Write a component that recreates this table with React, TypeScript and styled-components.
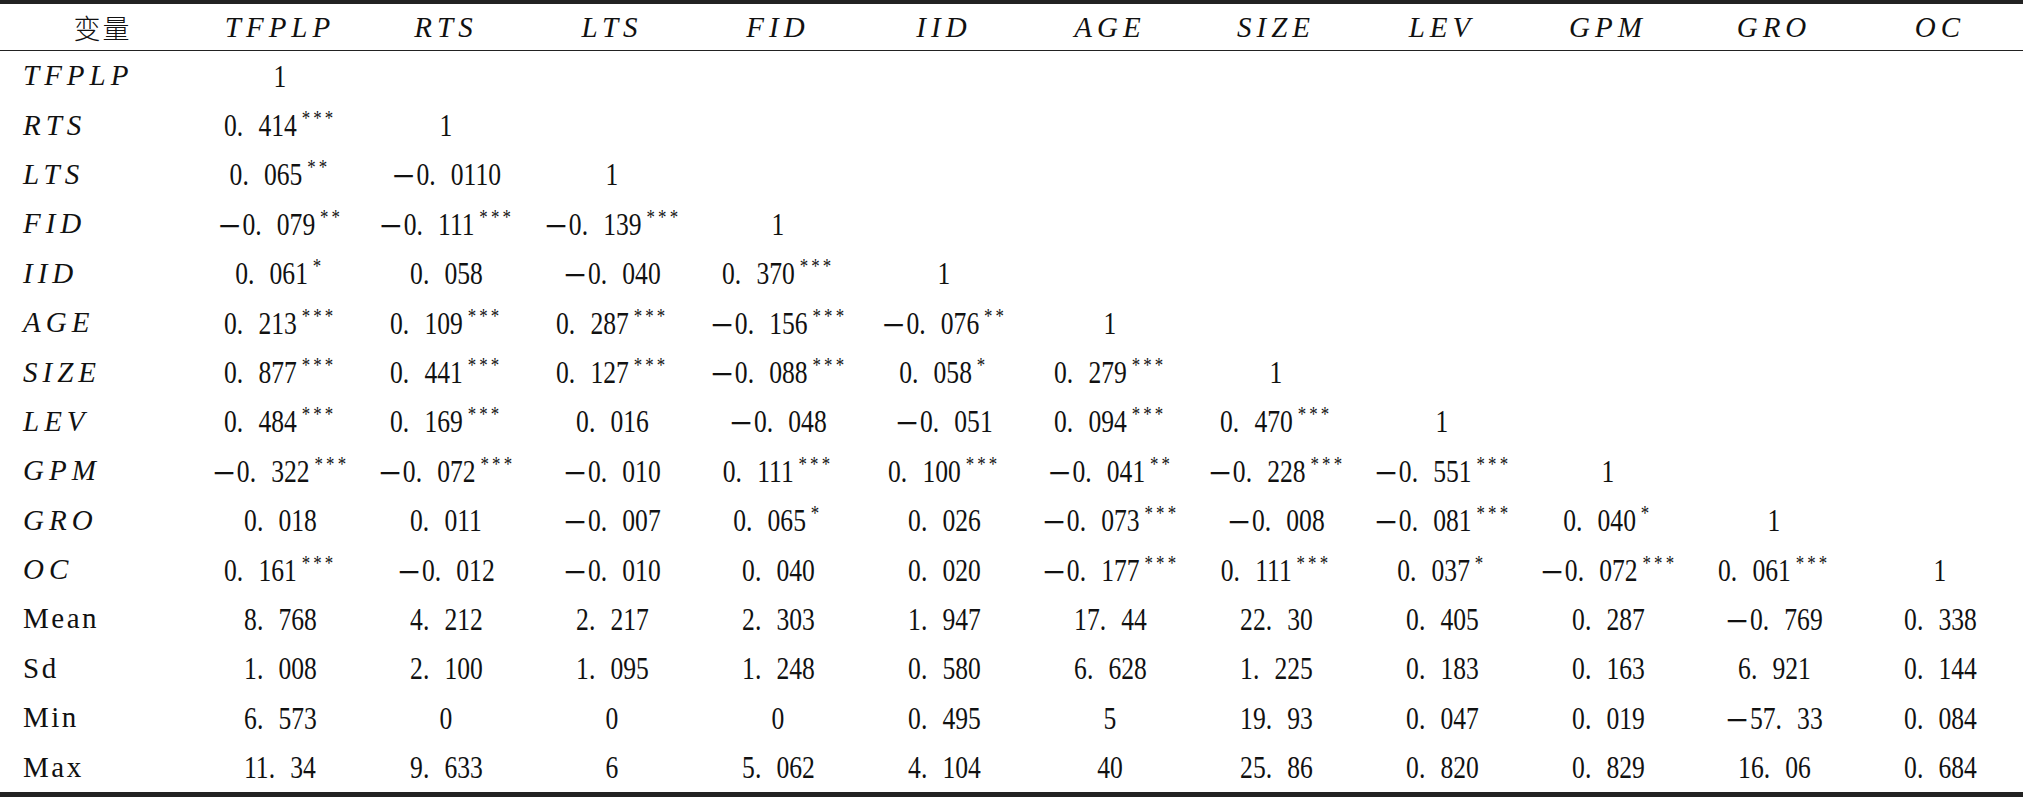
import React from "react";
import styled, { createGlobalStyle } from "styled-components";

const SERIFA = `"Liberation Serif", "Times New Roman", Tinos, "DejaVu Serif", serif`;

const GlobalStyle = createGlobalStyle`
  html, body {
    margin: 0;
    padding: 0;
    background: #ffffff;
  }
  body {
    font-family: ${SERIFA};
    color: #111111;
  }
`;

const Tabela = styled.div`
  width: 2023px;
  box-sizing: border-box;
  border-top: 4px solid #222222;
  border-bottom: 5px solid #222222;
`;

const Linha = styled.div<{ $cabecalho?: boolean }>`
  display: grid;
  grid-template-columns: 197px repeat(11, 166px);
  height: ${(p) => (p.$cabecalho ? "46px" : "49.4px")};
  border-bottom: ${(p) => (p.$cabecalho ? "1.5px solid #222222" : "none")};
`;

const Rotulo = styled.div<{ $italico?: boolean; $centro?: boolean }>`
  display: flex;
  align-items: center;
  justify-content: ${(p) => (p.$centro ? "center" : "flex-start")};
  padding-left: ${(p) => (p.$centro ? "8px" : "23px")};
  font-family: ${SERIFA};
  font-style: ${(p) => (p.$italico ? "italic" : "normal")};
  font-size: 29px;
  letter-spacing: ${(p) => (p.$italico ? "5px" : "2.5px")};
  white-space: nowrap;
`;

const Titulo = styled.span`
  font-family: "Noto Sans CJK SC", sans-serif;
  font-weight: 300;
  font-size: 27px;
  letter-spacing: 2px;
`;

const Celula = styled.div`
  display: flex;
  align-items: center;
  justify-content: center;
  white-space: nowrap;
`;

const Cabeca = styled(Celula)`
  font-family: ${SERIFA};
  font-style: italic;
  font-size: 29px;
  letter-spacing: 5px;
`;

const Valor = styled.span`
  display: inline-flex;
  align-items: flex-start;
  font-family: ${SERIFA};
  font-size: 32px;
  line-height: 1;
  transform: scaleX(0.8);
  transform-origin: center;
`;

const Menos = styled.span`
  font-family: "Noto Sans CJK SC", sans-serif;
`;

const Ponto = styled.span`
  margin-right: 19px;
`;

const Estrelas = styled.span`
  font-family: ${SERIFA};
  font-size: 21px;
  letter-spacing: 4px;
  line-height: 1;
  margin-left: 6px;
  margin-top: -1px;
`;

const cabecalhos = ["TFPLP", "RTS", "LTS", "FID", "IID", "AGE", "SIZE", "LEV", "GPM", "GRO", "OC"];

const correlacoes: string[][] = [
  ["1"],
  ["0.414***", "1"],
  ["0.065**", "-0.0110", "1"],
  ["-0.079**", "-0.111***", "-0.139***", "1"],
  ["0.061*", "0.058", "-0.040", "0.370***", "1"],
  ["0.213***", "0.109***", "0.287***", "-0.156***", "-0.076**", "1"],
  ["0.877***", "0.441***", "0.127***", "-0.088***", "0.058*", "0.279***", "1"],
  ["0.484***", "0.169***", "0.016", "-0.048", "-0.051", "0.094***", "0.470***", "1"],
  ["-0.322***", "-0.072***", "-0.010", "0.111***", "0.100***", "-0.041**", "-0.228***", "-0.551***", "1"],
  ["0.018", "0.011", "-0.007", "0.065*", "0.026", "-0.073***", "-0.008", "-0.081***", "0.040*", "1"],
  ["0.161***", "-0.012", "-0.010", "0.040", "0.020", "-0.177***", "0.111***", "0.037*", "-0.072***", "0.061***", "1"],
];

const estatisticas: { nome: string; valores: string[] }[] = [
  { nome: "Mean", valores: ["8.768", "4.212", "2.217", "2.303", "1.947", "17.44", "22.30", "0.405", "0.287", "-0.769", "0.338"] },
  { nome: "Sd", valores: ["1.008", "2.100", "1.095", "1.248", "0.580", "6.628", "1.225", "0.183", "0.163", "6.921", "0.144"] },
  { nome: "Min", valores: ["6.573", "0", "0", "0", "0.495", "5", "19.93", "0.047", "0.019", "-57.33", "0.084"] },
  { nome: "Max", valores: ["11.34", "9.633", "6", "5.062", "4.104", "40", "25.86", "0.820", "0.829", "16.06", "0.684"] },
];

//-- números no estilo da tabela (traço longo e ponto espaçado)
const Numero: React.FC<{ texto: string }> = ({ texto }) => {
  const estrelas = texto.replace(/[^*]/g, "");
  const base = texto.replace(/\*/g, "");
  const negativo = base.startsWith("-");
  const [inteiro, decimal] = base.replace("-", "").split(".");
  return (
    <Valor>
      {negativo && <Menos>－</Menos>}
      {inteiro}
      {decimal !== undefined && <Ponto>.</Ponto>}
      {decimal}
      {estrelas && <Estrelas>{estrelas}</Estrelas>}
    </Valor>
  );
};

const App: React.FC = () => {
  return (
    <>
      <GlobalStyle />
      <Tabela>
        <Linha $cabecalho>
          <Rotulo $centro>
            <Titulo>变量</Titulo>
          </Rotulo>
          {cabecalhos.map((c) => (
            <Cabeca key={c}>{c}</Cabeca>
          ))}
        </Linha>

        {correlacoes.map((linha, i) => (
          <Linha key={cabecalhos[i]}>
            <Rotulo $italico>{cabecalhos[i]}</Rotulo>
            {cabecalhos.map((c, j) => (
              <Celula key={c}>{linha[j] !== undefined && <Numero texto={linha[j]} />}</Celula>
            ))}
          </Linha>
        ))}

        {estatisticas.map((e) => (
          <Linha key={e.nome}>
            <Rotulo>{e.nome}</Rotulo>
            {e.valores.map((v, j) => (
              <Celula key={j}>
                <Numero texto={v} />
              </Celula>
            ))}
          </Linha>
        ))}
      </Tabela>
    </>
  );
};

export default App;
